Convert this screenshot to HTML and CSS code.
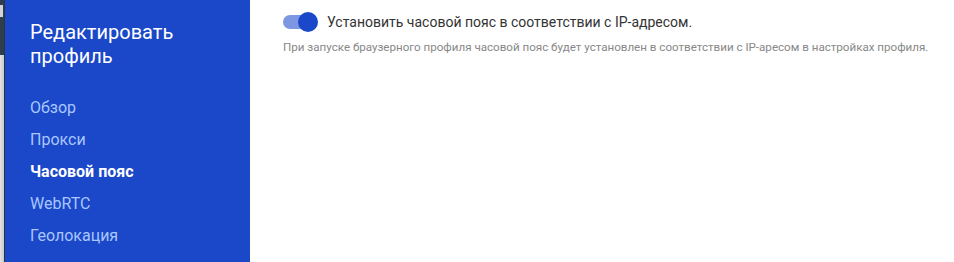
FILE: index.html
```html
<!doctype html>
<html>
<head>
    <meta charset="utf-8">
    <title>Редактировать профиль</title>
    <link rel="stylesheet" href="styles.css">
</head>
<body>
<div class="page">
	<div class="edge">
		<div class="edge-top"><span class="edge-mark"></span></div>
		<div class="edge-rest"></div>
	</div>
	<div class="side">
		<h1 class="side-title">Редактировать профиль</h1>
		<ul class="nav">
			<li>Обзор</li>
			<li>Прокси</li>
			<li class="active">Часовой пояс</li>
			<li>WebRTC</li>
			<li>Геолокация</li>
		</ul>
	</div>
	<div class="main">
		<div class="opt">
			<span class="toggle on"><span class="knob"></span></span>
			<span class="opt-label">Установить часовой пояс в соответствии с IP-адресом.</span>
		</div>
		<p class="opt-hint">При запуске браузерного профиля часовой пояс будет установлен в соответствии с IP-аресом в настройках профиля.</p>
	</div>
</div>
</body>
</html>
```

FILE: styles.css
```css
*{margin: 0;padding: 0;list-style: none;box-sizing: border-box;}
body,html{height: 100%;}
body{
	font-family: Roboto, "Liberation Sans", Arial, sans-serif;
	background: #fff;
}
.page{
	display: flex;
	height: 262px;
}
.edge{
	width: 5px;
	display: flex;flex-direction: column;
	border-right: 1px solid #2a3340;
}
.edge-top{
	height: 55px;background: #2f3e4f;
	padding-top: 5px;
}
.edge-mark{
	display: block;width: 3px;height: 12px;background: #d0d4d8;
}
.edge-rest{
	flex: 1;
	background: linear-gradient(to right,#e4e4e4,#c8c8c8);
}
.side{
	width: 245px;
	background: #1a48c8;
	padding: 20px 0 0 25px;
}
.side-title{
	font-size: 20px;font-weight: 400;line-height: 24px;
	color: #fff;
	width: 170px;
}
.nav{
	margin-top: 24px;
}
.nav li{
	font-size: 16px;line-height: 32px;height: 32px;
	color: #a9c6ff;
	cursor: pointer;
}
.nav li.active{
	color: #fff;font-weight: 700;
}
.main{
	flex: 1;
	padding: 12px 0 0 33px;
}
.opt{
	display: flex;align-items: center;
	height: 20px;
}
.toggle{
	position: relative;
	width: 34px;height: 14px;border-radius: 7px;
	background: #7d97e2;
	margin-right: 10px;
}
.toggle .knob{
	position: absolute;right: -1px;top: -3px;
	width: 20px;height: 20px;border-radius: 50%;
	background: #1a48c8;
}
.opt-label{
	font-size: 14px;color: #333;
}
.opt-hint{
	margin-top: 8px;
	font-size: 11.6px;color: #888;
}
```
